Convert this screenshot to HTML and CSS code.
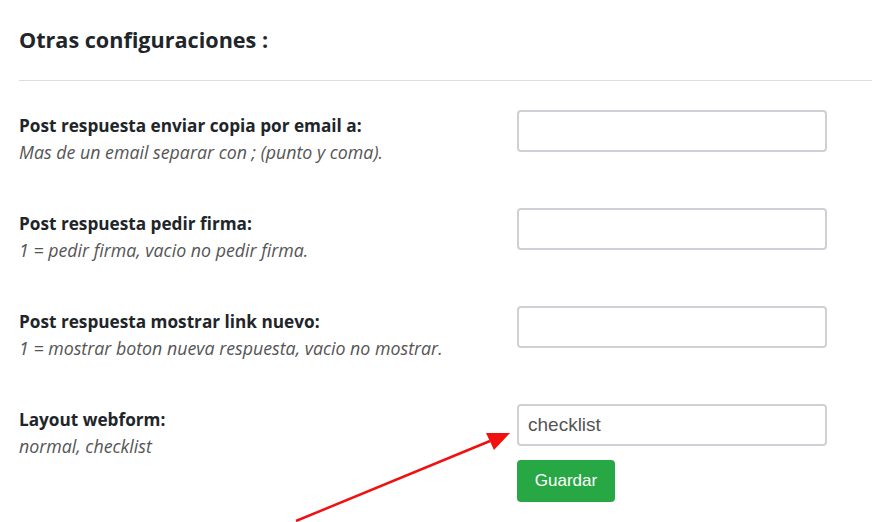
FILE: index.html
```html
<!DOCTYPE html>
<html lang="es">
<head>
    <meta charset="UTF-8">
    <title>Otras configuraciones</title>
    <link rel="stylesheet" href="styles.css">
</head>
<body>
    <div class="page">
        <h2 class="title">Otras configuraciones :</h2>
        <hr class="divider">

        <form class="settings">
            <div class="row">
                <div class="info">
                    <label for="copyEmail">Post respuesta enviar copia por email a:</label>
                    <p class="hint">Mas de un email separar con ; (punto y coma).</p>
                </div>
                <div class="field">
                    <input type="text" id="copyEmail">
                </div>
            </div>

            <div class="row">
                <div class="info">
                    <label for="askSign">Post respuesta pedir firma:</label>
                    <p class="hint">1 = pedir firma, vacio no pedir firma.</p>
                </div>
                <div class="field">
                    <input type="text" id="askSign">
                </div>
            </div>

            <div class="row">
                <div class="info">
                    <label for="newLink">Post respuesta mostrar link nuevo:</label>
                    <p class="hint">1 = mostrar boton nueva respuesta, vacio no mostrar.</p>
                </div>
                <div class="field">
                    <input type="text" id="newLink">
                </div>
            </div>

            <div class="row last">
                <div class="info">
                    <label for="layout">Layout webform:</label>
                    <p class="hint">normal, checklist</p>
                </div>
                <div class="field">
                    <input type="text" id="layout" value="checklist">
                    <button type="button" class="btn-save">Guardar</button>
                </div>
            </div>
        </form>

        <svg class="arrow" width="240" height="100" viewBox="0 0 240 100">
            <line x1="6" y1="97" x2="200" y2="17" stroke="#f01010" stroke-width="2.5"/>
            <polygon points="220,9 196,9 204,26" fill="#f01010"/>
        </svg>
    </div>
</body>
</html>
```

FILE: styles.css
```css
body {
    margin: 0;
    font-family: "Open Sans", Lato, sans-serif;
    color: #212529;
    background: #fff;
    overflow: hidden;
}
.page {
    position: relative;
    height: 522px;
    padding: 26px 0 0 19px;
    box-sizing: border-box;
}
.title {
    margin: 0;
    font-size: 21.6px;
    font-weight: 700;
    line-height: 28px;
}
.divider {
    border: none;
    border-top: 1px solid #ddd;
    margin: 26px 0 0;
}
.settings {
    margin-top: 29px;
}
.row {
    display: grid;
    grid-template-columns: 498px 310px;
    height: 98px;
}
.info {
    padding-top: 4px;
}
.info label {
    display: block;
    font-size: 17.2px;
    font-weight: 700;
    line-height: 24px;
}
.hint {
    margin: 2px 0 0;
    font-size: 17.8px;
    font-style: italic;
    color: #555;
    line-height: 24px;
}
.field input {
    display: block;
    width: 100%;
    height: 42px;
    box-sizing: border-box;
    padding: 6px 9px;
    border: 2px solid #ced0d8;
    border-radius: 4px;
    font-family: "Liberation Sans", Arial, sans-serif;
    font-size: 19px;
    color: #555;
}
.btn-save {
    margin-top: 14px;
    width: 98px;
    height: 42px;
    background: #28a745;
    color: #fff;
    border: none;
    border-radius: 4px;
    font-family: "Liberation Sans", Arial, sans-serif;
    font-size: 17px;
    cursor: pointer;
}
.arrow {
    position: absolute;
    left: 290px;
    top: 424px;
}
```
